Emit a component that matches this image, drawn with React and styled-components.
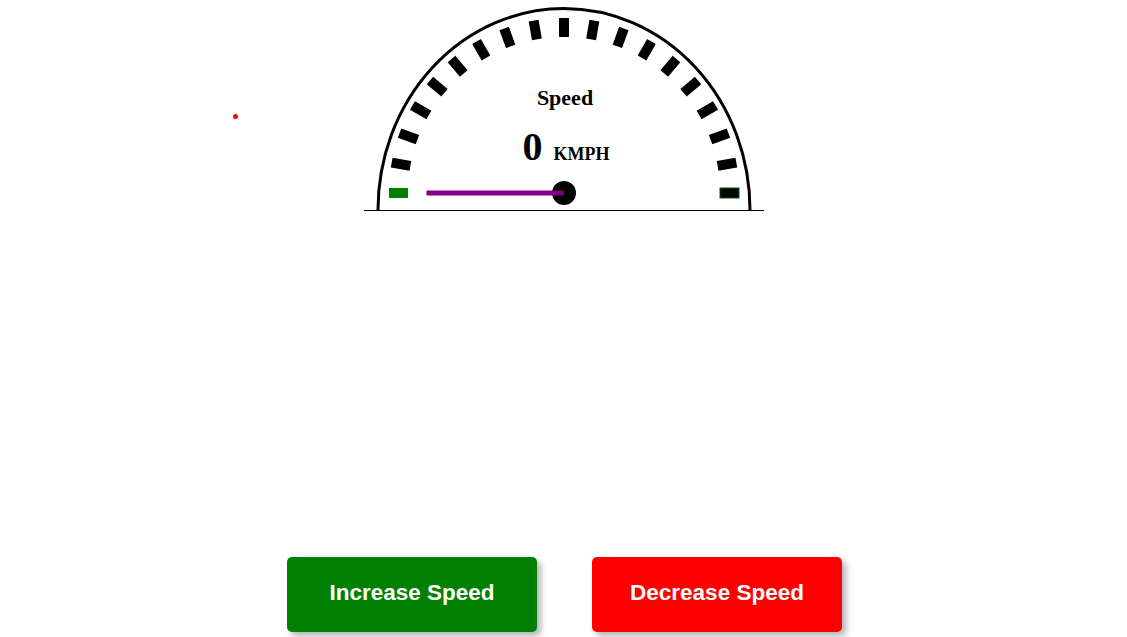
import React, { useState } from "react";
import styled, { createGlobalStyle } from "styled-components";

const GlobalStyle = createGlobalStyle`
  body {
    margin: 0;
    background: #ffffff;
    font-family: "Liberation Sans", Arial, sans-serif;
  }
`;

const CX = 200;
const CY = 193;
const TICKS = Array.from({ length: 19 }, (_, i) => i);

const Speedometer = ({ speed }) => {
  // needle goes from 0 (left) to 180 (right)
  const angle = 180 + Math.min(speed, 180);
  return (
    <Dial width="400" height="211" viewBox="0 0 400 211">
      <path
        d="M 14 210 A 186 201.5 0 0 1 386 210"
        fill="none"
        stroke="#000"
        strokeWidth="3"
      />
      <line x1="0" y1="210.5" x2="400" y2="210.5" stroke="#000" strokeWidth="1" />
      {TICKS.map((i) => (
        <rect
          key={i}
          x="156"
          y="-5"
          width="19"
          height="10"
          fill={i === 0 ? "#008000" : "#000"}
          stroke={i === 18 ? "#006400" : "none"}
          strokeWidth="1"
          transform={`translate(${CX} ${CY}) rotate(${180 + i * 10})`}
        />
      ))}
      <text
        x="201"
        y="105"
        textAnchor="middle"
        fontFamily='"Liberation Serif", "Times New Roman", serif'
        fontWeight="bold"
        fontSize="22"
      >
        Speed
      </text>
      <text
        x="158.5"
        y="160"
        fontFamily='"Liberation Serif", "Times New Roman", serif'
        fontWeight="bold"
        fontSize="40"
      >
        {speed}
      </text>
      <text
        x="189.5"
        y="160"
        fontFamily='"Liberation Serif", "Times New Roman", serif'
        fontWeight="bold"
        fontSize="18"
      >
        KMPH
      </text>
      <circle cx={CX} cy={CY} r="12" fill="#000" />
      <g transform={`translate(${CX} ${CY}) rotate(${angle})`}>
        <line x1="0" y1="0" x2="137.5" y2="0" stroke="#800080" strokeWidth="5" />
      </g>
    </Dial>
  );
};

const App = () => {
  const [speed, setSpeed] = useState(0);

  return (
    <>
      <GlobalStyle />
      <Page>
        <Dot />
        <Speedometer speed={speed} />
        <Controls>
          <SpeedButton $color="#008000" onClick={() => setSpeed((s) => Math.min(s + 10, 180))}>
            Increase Speed
          </SpeedButton>
          <SpeedButton $color="#ff0000" onClick={() => setSpeed((s) => Math.max(s - 10, 0))}>
            Decrease Speed
          </SpeedButton>
        </Controls>
      </Page>
    </>
  );
};

export default App;

const Page = styled.div`
  position: relative;
  display: flex;
  flex-direction: column;
  align-items: center;
  width: 100%;
  min-height: 637px;
`;

const Dot = styled.span`
  position: absolute;
  left: 233px;
  top: 114px;
  width: 5px;
  height: 5px;
  border-radius: 50%;
  background: #ff0000;
`;

const Dial = styled.svg`
  display: block;
  margin-left: 1px;
`;

const Controls = styled.div`
  display: flex;
  gap: 55px;
  margin-top: 346px;
  margin-left: 2px;
`;

const SpeedButton = styled.button`
  width: 250px;
  height: 75px;
  padding: 0 0 3px;
  border: none;
  border-radius: 5px;
  background: ${(p) => p.$color};
  color: #ffffff;
  font-family: "Liberation Sans", Arial, sans-serif;
  font-weight: bold;
  font-size: 22.5px;
  box-shadow: 4px 4px 6px rgba(0, 0, 0, 0.3);
  cursor: pointer;
`;
